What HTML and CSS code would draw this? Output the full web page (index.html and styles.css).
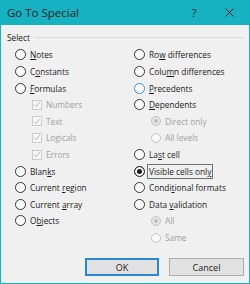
FILE: index.html
```html
<!DOCTYPE html>
<html lang="en">
<head>
  <meta charset="UTF-8" />
  <title>Go To Special</title>
  <link rel="stylesheet" href="styles.css">
</head>
<body>
  <div class="dialog">
    <!-- Title bar -->
    <div class="titlebar">
      <span class="title">Go To Special</span>
      <span class="help">?</span>
      <span class="close">
        <svg width="9" height="9" viewBox="0 0 9 9"><path d="M0.5 0.5 L8.5 8.5 M8.5 0.5 L0.5 8.5" stroke="#1a1a1a" stroke-width="1" fill="none"/></svg>
      </span>
    </div>

    <div class="content">
      <div class="legend"><span>Select</span><div class="rule"></div></div>

      <div class="options">
        <!-- Left column -->
        <div class="col">
          <div class="row"><span class="radio"></span><span><u>N</u>otes</span></div>
          <div class="row"><span class="radio"></span><span>C<u>o</u>nstants</span></div>
          <div class="row"><span class="radio"></span><span><u>F</u>ormulas</span></div>
          <div class="row sub disabled"><span class="check"><svg width="9" height="9" viewBox="0 0 9 9"><path d="M1.5 4.5 L3.6 6.8 L7.6 1.8" stroke="#b4b4b4" stroke-width="1.1" fill="none"/></svg></span><span>Numbers</span></div>
          <div class="row sub disabled"><span class="check"><svg width="9" height="9" viewBox="0 0 9 9"><path d="M1.5 4.5 L3.6 6.8 L7.6 1.8" stroke="#b4b4b4" stroke-width="1.1" fill="none"/></svg></span><span>Text</span></div>
          <div class="row sub disabled"><span class="check"><svg width="9" height="9" viewBox="0 0 9 9"><path d="M1.5 4.5 L3.6 6.8 L7.6 1.8" stroke="#b4b4b4" stroke-width="1.1" fill="none"/></svg></span><span>Logicals</span></div>
          <div class="row sub disabled"><span class="check"><svg width="9" height="9" viewBox="0 0 9 9"><path d="M1.5 4.5 L3.6 6.8 L7.6 1.8" stroke="#b4b4b4" stroke-width="1.1" fill="none"/></svg></span><span>Errors</span></div>
          <div class="row"><span class="radio"></span><span>Blan<u>k</u>s</span></div>
          <div class="row"><span class="radio"></span><span>Current <u>r</u>egion</span></div>
          <div class="row"><span class="radio"></span><span>Current <u>a</u>rray</span></div>
          <div class="row"><span class="radio"></span><span>O<u>b</u>jects</span></div>
        </div>

        <!-- Right column -->
        <div class="col">
          <div class="row"><span class="radio"></span><span>Ro<u>w</u> differences</span></div>
          <div class="row"><span class="radio"></span><span>Colu<u>m</u>n differences</span></div>
          <div class="row"><span class="radio hover"></span><span><u>P</u>recedents</span></div>
          <div class="row"><span class="radio"></span><span><u>D</u>ependents</span></div>
          <div class="row sub disabled"><span class="radio small selected"></span><span>Direct only</span></div>
          <div class="row sub disabled"><span class="radio small"></span><span>All levels</span></div>
          <div class="row"><span class="radio"></span><span>La<u>s</u>t cell</span></div>
          <div class="row"><span class="radio selected"></span><span class="focus">Visible cells onl<u>y</u></span></div>
          <div class="row"><span class="radio"></span><span>Condi<u>t</u>ional formats</span></div>
          <div class="row"><span class="radio"></span><span>Data <u>v</u>alidation</span></div>
          <div class="row sub disabled"><span class="radio small selected"></span><span>All</span></div>
          <div class="row sub disabled"><span class="radio small"></span><span>Same</span></div>
        </div>
      </div>

      <div class="buttons">
        <button class="btn default">OK</button>
        <button class="btn">Cancel</button>
      </div>
    </div>
  </div>
</body>
</html>
```

FILE: styles.css
```css
/* Base */
* { box-sizing: border-box; margin: 0; padding: 0; }
body {
  font-family: 'Open Sans', 'Noto Sans', sans-serif;
  font-size: 8.3px;
  color: #1a1a1a;
  background: #fff;
}
/* Dialog frame */
.dialog {
  width: 250px;
  height: 284px;
  background: #f0f0f0;
  border: 1px solid #17b2c2;
  border-top: none;
  display: flex;
  flex-direction: column;
}
.titlebar {
  height: 25px;
  background: #17b2c2;
  display: flex;
  align-items: center;
  padding-left: 6px;
  font-size: 11.5px;
  color: #1a1a1a;
}
.title { flex: 1; }
.help { width: 12px; margin-right: 25px; text-align: center; font-size: 11px; }
.close { width: 9px; height: 9px; margin-right: 15px; display: flex; }
/* Content */
.content {
  flex: 1;
  display: flex;
  flex-direction: column;
  padding: 0 5px 7px 6px;
}
.legend {
  margin-top: 6px;
  height: 12px;
  display: flex;
  align-items: center;
  gap: 4px;
}
.rule {
  flex: 1;
  height: 1px;
  background: #dcdcdc;
}
.options {
  margin-top: 3.7px;
  padding-left: 8px;
  display: grid;
  grid-template-columns: 119px 1fr;
}
.col { display: flex; flex-direction: column; }
.row {
  height: 16.6px;
  display: flex;
  align-items: center;
  gap: 4px;
  white-space: nowrap;
}
.row.sub { padding-left: 17px; }
.row.disabled { color: #a0a0a0; }
/* Radios and checks */
.radio {
  width: 11px;
  height: 11px;
  flex: none;
  border-radius: 50%;
  border: 1px solid #333;
  background: #fff;
}
.radio.hover { border-color: #2d8ee0; }
.radio.selected {
  background: #1a1a1a;
  box-shadow: inset 0 0 0 2px #fff;
}
.radio.small {
  width: 10px;
  height: 10px;
  border-color: #c4c4c4;
  background: #fcfcfc;
}
.radio.small.selected {
  background: #bcbcbc;
  box-shadow: inset 0 0 0 2px #e8e8e8;
}
.check {
  width: 10px;
  height: 10px;
  flex: none;
  border: 1px solid #cbcbcb;
  background: #f7f7f7;
  display: flex;
  align-items: center;
  justify-content: center;
}
.focus {
  outline: 1px solid #6f6f6f;
  outline-offset: 1px;
}
/* Buttons */
.buttons {
  margin-top: auto;
  display: flex;
  justify-content: flex-end;
  gap: 10px;
}
.btn {
  width: 75px;
  height: 18px;
  font-family: inherit;
  font-size: 9px;
  color: #1a1a1a;
  background: #e1e1e1;
  border: 1px solid #adadad;
}
.btn.default {
  width: 74px;
  border: 2px solid #2b86d6;
}
```
